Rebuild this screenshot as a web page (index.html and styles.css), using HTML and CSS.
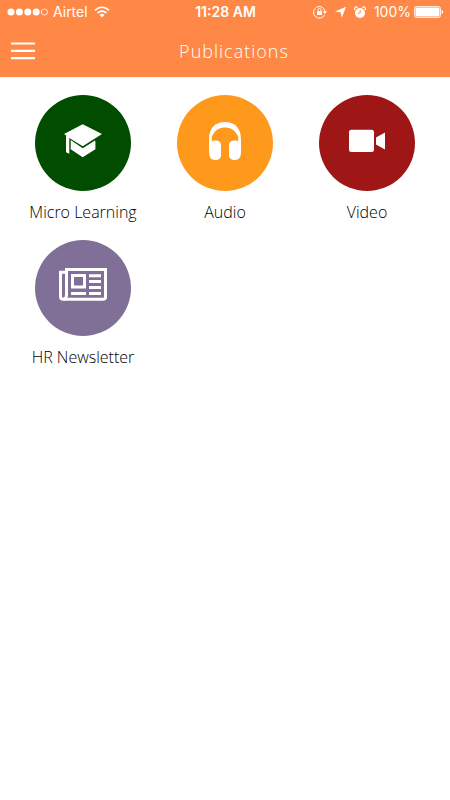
FILE: index.html
```html
<!DOCTYPE html>
<html lang="en">

<head>
    <meta charset="utf-8">
    <meta name="viewport" content="width=device-width, initial-scale=1">
    <title>Publications</title>
    <link rel="stylesheet" href="styles.css">
</head>

<body>
    <header>
        <div class="status">
            <div class="status_left">
                <svg class="signal" width="42" height="8" viewBox="0 0 42 8" aria-hidden="true">
                    <g fill="#fff">
                        <circle cx="4" cy="4" r="3.5"/>
                        <circle cx="12.4" cy="4" r="3.5"/>
                        <circle cx="20.8" cy="4" r="3.5"/>
                        <circle cx="29.2" cy="4" r="3.5"/>
                    </g>
                    <circle cx="37.4" cy="4" r="3.1" fill="none" stroke="#fff" stroke-width=".8"/>
                </svg>
                <span>Airtel</span>
                <svg width="16" height="12" viewBox="0 0 16 12" aria-hidden="true">
                    <g fill="none" stroke="#fff" stroke-width="1.7">
                        <path d="M1 4.4C5 .2 11 .2 15 4.4"/>
                        <path d="M3.5 7C6 4.4 10 4.4 12.5 7"/>
                    </g>
                    <path d="M5.4 8.8C7 7.4 9 7.4 10.6 8.8L8 11.5z" fill="#fff"/>
                </svg>
            </div>
            <time class="clock">11:28 AM</time>
            <div class="status_right">
                <svg width="14" height="14" viewBox="0 0 14 14" aria-hidden="true">
                    <path d="M11.6 9.8A5.8 5.8 0 1 1 12 6" fill="none" stroke="#fff"/>
                    <path d="M9.8 6.2H14L11.9 9z" fill="#fff"/>
                    <rect x="4" y="6.2" width="5" height="3.8" fill="#fff"/>
                    <path d="M5 6.4V5a1.5 1.5 0 0 1 3 0v1.4" fill="none" stroke="#fff" stroke-width=".9"/>
                </svg>
                <svg width="11" height="12" viewBox="0 0 11 12" aria-hidden="true">
                    <path d="M11 .8L6.8 11.8L5.8 6.6L0 5.6z" fill="#fff"/>
                </svg>
                <svg width="12" height="13" viewBox="0 0 12 13" aria-hidden="true">
                    <circle cx="6" cy="7" r="5" fill="#fff"/>
                    <path d="M.7 4A2.2 2.2 0 0 1 3.8 1.2M8.2 1.2A2.2 2.2 0 0 1 11.3 4" fill="none" stroke="#fff" stroke-width="1.3"/>
                    <path d="M6.2 4V7.2H3.8" fill="none" stroke="#ff8846" stroke-width=".9"/>
                </svg>
                <span>100%</span>
                <svg class="battery" width="30" height="12" viewBox="0 0 30 12" aria-hidden="true">
                    <rect x=".5" y=".5" width="26" height="11" rx="2" fill="none" stroke="#fff" stroke-opacity=".8"/>
                    <rect x="1.5" y="1.5" width="24" height="9" rx="1" fill="#fff"/>
                    <path d="M27.6 4Q29.2 4.4 29.2 6T27.6 8z" fill="#fff"/>
                </svg>
            </div>
        </div>
        <nav>
            <button class="menu" type="button" aria-label="Menu">
                <svg width="24" height="18" viewBox="0 0 24 18" aria-hidden="true">
                    <path d="M0 1.5H24M0 8.8H24M0 16.1H24" stroke="#fff" stroke-width="2.2"/>
                </svg>
            </button>
            <h1>Publications</h1>
        </nav>
    </header>
    <main>
        <a class="tile" href="#micro-learning">
            <svg class="disc learning" viewBox="0 0 96 96" aria-hidden="true">
                <path d="M47.7 29.3L67 39L47.7 51.2L34.3 43V58.7L31 57.2V40.3L29 39z" fill="#fff"/>
                <path d="M35.7 45L47.7 53.2L60 45.4L60.4 47V54.3L47.7 62.2L35.7 54.3z" fill="#fff"/>
            </svg>
            <span>Micro Learning</span>
        </a>
        <a class="tile" href="#audio">
            <svg class="disc audio" viewBox="0 0 96 96" aria-hidden="true">
                <path d="M32 57V44C32 33.5 38 27 48 27S64 33.5 64 44V57C64 62 62 65 58 65C54 65 52 63 52 60V50C52 47 54 45.5 57 45.5H59L61.2 46.5V41.5L59 38C57 34.5 52.5 32.4 48 32.4S39 34.5 37 38L34.8 41.5V46.5L37 45.5H39C42 45.5 44 47 44 50V60C44 63 42 65 38 65C34 65 32 62 32 57z" fill="#fff"/>
            </svg>
            <span>Audio</span>
        </a>
        <a class="tile" href="#video">
            <svg class="disc video" viewBox="0 0 96 96" aria-hidden="true">
                <rect x="30" y="34.7" width="25" height="22.3" rx="2.5" fill="#fff"/>
                <path d="M57 42.6L66 37.6V54.4L57 49.4z" fill="#fff"/>
            </svg>
            <span>Video</span>
        </a>
        <a class="tile" href="#hr-newsletter">
            <svg class="disc news" viewBox="0 0 96 96" aria-hidden="true">
                <g fill="none" stroke="#fff" stroke-width="3">
                    <path d="M31.5 56V29.5H70.5V57Q70.5 59.3 68 59.3H28.5Q25.5 59.3 25.5 56.5V32.2H31.5"/>
                    <path d="M31.5 55Q31.5 59 28.5 59.3"/>
                    <rect x="37.5" y="35.5" width="12" height="11.5"/>
                    <path d="M54 35.7H66M54 41.6H66M54 47.5H66M54 53.4H66M36 53.4H51"/>
                </g>
            </svg>
            <span>HR Newsletter</span>
        </a>
    </main>
</body>

</html>
```

FILE: styles.css
```css
* {
    box-sizing: border-box;
}

body {
    margin: 0;
    background-color: #fff;
    color: #000;
    font-family: "Open Sans", "Noto Sans", sans-serif;
}

header {
    background-color: #ff8846;
    color: #fff;
}

.status {
    display: grid;
    grid-template-columns: 1fr auto 1fr;
    align-items: center;
    height: 24px;
    padding: 0 6px 0 7px;
    font-family: Inter, Roboto, sans-serif;
    font-size: 14px;
    line-height: 24px;
}

.status_left,
.status_right {
    display: flex;
    align-items: center;
    gap: 6px;
}

.signal {
    margin-right: -2px;
}

.status_right {
    justify-content: flex-end;
    gap: 8px;
}

.battery {
    margin-left: -5px;
}

.clock {
    font-weight: 600;
}

nav {
    display: flex;
    align-items: center;
    height: 53px;
    padding: 0 20px 0 8px;
}

.menu {
    display: flex;
    padding: 3px;
    border: 0;
    background: none;
    cursor: pointer;
}

h1 {
    flex: 1;
    margin: 0;
    font-size: 18px;
    font-weight: 300;
    line-height: 28px;
    letter-spacing: 1px;
    text-align: center;
}

main {
    display: grid;
    grid-template-columns: repeat(3, 1fr);
    row-gap: 16px;
    padding: 18px 12px;
}

.tile {
    display: flex;
    flex-direction: column;
    align-items: center;
    gap: 9px;
    color: inherit;
    font-size: 16px;
    font-weight: 300;
    line-height: 24px;
    text-decoration: none;
}

.disc {
    width: 96px;
    height: 96px;
    border-radius: 50%;
}

.learning {
    background-color: #004d00;
}

.audio {
    background-color: #ff991c;
}

.video {
    background-color: #9e1616;
}

.news {
    background-color: #806f96;
}
```
